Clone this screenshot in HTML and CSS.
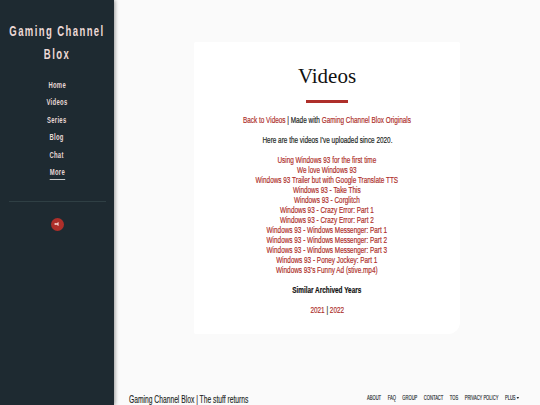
FILE: index.html
```html
<!DOCTYPE html>
<html>
<head>
  <meta charset="UTF-8">
  <title>Videos</title>
  <link rel="stylesheet" href="styles.css">
</head>
<body>
  <div class="sidebar">
    <h1 class="brand">Gaming Channel<br>Blox</h1>
    <nav class="side-nav">
      <a href="#">Home</a>
      <a href="#">Videos</a>
      <a href="#">Series</a>
      <a href="#">Blog</a>
      <a href="#">Chat</a>
      <a href="#" class="current">More</a>
    </nav>
    <hr class="side-rule">
    <button class="share-button" aria-label="Share">
      <svg width="6" height="6" viewBox="0 0 6 6"><path d="M4.6 1 1.2 3l3.4 2z" fill="#f0c9c5"/><circle cx="1.4" cy="3" r="1" fill="#f0c9c5"/></svg>
    </button>
  </div>

  <div class="main">
    <div class="card">
      <h2 class="card-title">Videos</h2>
      <div class="title-bar"></div>
      <p class="intro"><a href="#">Back to Videos</a> | Made with <a href="#">Gaming Channel Blox Originals</a></p>
      <p>Here are the videos I've uploaded since 2020.</p>
      <p>
        <a href="#">Using Windows 93 for the first time</a><br>
        <a href="#">We love Windows 93</a><br>
        <a href="#">Windows 93 Trailer but with Google Translate TTS</a><br>
        <a href="#">Windows 93 - Take This</a><br>
        <a href="#">Windows 93 - Corglitch</a><br>
        <a href="#">Windows 93 - Crazy Error: Part 1</a><br>
        <a href="#">Windows 93 - Crazy Error: Part 2</a><br>
        <a href="#">Windows 93 - Windows Messenger: Part 1</a><br>
        <a href="#">Windows 93 - Windows Messenger: Part 2</a><br>
        <a href="#">Windows 93 - Windows Messenger: Part 3</a><br>
        <a href="#">Windows 93 - Poney Jockey: Part 1</a><br>
        <a href="#">Windows 93's Funny Ad (stive.mp4)</a>
      </p>
      <p><strong>Similar Archived Years</strong></p>
      <p><a href="#">2021</a> | <a href="#">2022</a></p>
    </div>

    <div class="footer">
      <div class="footer-name">Gaming Channel Blox | The stuff returns</div>
      <div class="footer-links">
        <a href="#">About</a>
        <a href="#">FAQ</a>
        <a href="#">Group</a>
        <a href="#">Contact</a>
        <a href="#">TOS</a>
        <a href="#">Privacy Policy</a>
        <a href="#">Plus <span class="caret"></span></a>
      </div>
    </div>
  </div>
</body>
</html>
```

FILE: styles.css
```css
html, body {
  height: 100%;
}

body {
  margin: 0;
  display: flex;
  overflow: hidden;
  background-color: #fafafa;
  color: #1b1f22;
  font-family: "Liberation Sans", sans-serif;
}

a {
  color: #ae2f2a;
  text-decoration: none;
}

/* Sidebar */
.sidebar {
  width: 114px;
  flex-shrink: 0;
  background-color: #1e2a31;
  box-shadow: 1px 0 4px rgba(0, 0, 0, 0.4);
  display: flex;
  flex-direction: column;
  align-items: center;
  padding-top: 19px;
  box-sizing: border-box;
}

/* no condensed face is installed, so the text is squeezed sideways */
.brand {
  margin: 0;
  text-align: center;
  white-space: nowrap;
  font-size: 15px;
  line-height: 23px;
  letter-spacing: 2.2px;
  font-weight: 700;
  color: #edd9d6;
  transform: scaleX(0.635);
}

.side-nav {
  margin-top: 14px;
  display: flex;
  flex-direction: column;
  align-items: center;
}

.side-nav a {
  color: #e8d8d6;
  font-size: 9.5px;
  font-weight: 700;
  letter-spacing: 0.5px;
  line-height: 11px;
  margin-bottom: 6.4px;
  transform: scaleX(0.62);
}

.side-nav a.current {
  padding: 0 0 2px;
  border-bottom: 1px solid #c8c8c8;
  margin-bottom: 0;
}

.side-rule {
  width: 97px;
  margin: 21px 0 0;
  border: none;
  border-top: 1px solid #2f3f44;
}

.share-button {
  width: 13px;
  height: 13px;
  margin-top: 16px;
  padding: 0;
  border: none;
  border-radius: 50%;
  background-color: #ae2f2a;
  display: flex;
  align-items: center;
  justify-content: center;
}

/* Main column */
.main {
  flex: 1;
  min-width: 0;
  display: flex;
  flex-direction: column;
  padding-top: 42px;
  box-sizing: border-box;
}

.card {
  width: 266px;
  height: 292px;
  margin-left: 80px;
  padding-top: 21px;
  box-sizing: border-box;
  background-color: #fff;
  border-radius: 2px 2px 12px 2px;
  display: flex;
  flex-direction: column;
  align-items: center;
  text-align: center;
  font-size: 9.6px;
  line-height: 10px;
}

.card-title {
  margin: 0;
  font-family: "Liberation Serif", serif;
  font-weight: 400;
  font-size: 21px;
  line-height: 26px;
  color: #111;
}

.title-bar {
  width: 42px;
  height: 3px;
  margin: 11px 0 0;
  background-color: #ae2f2a;
}

.card p {
  margin: 10px 0 0;
  white-space: nowrap;
  transform: scaleX(0.667);
  -webkit-text-stroke: 0.2px;
}

.card p.intro {
  margin-top: 12px;
}

.card strong {
  color: #111;
}

/* Footer */
.footer {
  margin-top: auto;
  padding: 0 21px 0 15px;
  display: flex;
  align-items: center;
  justify-content: space-between;
  height: 12px;
  box-sizing: border-box;
}

.footer-name {
  width: 119px;
  flex: none;
  font-size: 11px;
  white-space: nowrap;
  -webkit-text-stroke: 0.15px;
  transform: scaleX(0.61);
  transform-origin: left center;
}

.footer-links {
  flex: none;
  display: flex;
  gap: 10px;
  margin-bottom: 3px;
  white-space: nowrap;
  transform: scaleX(0.65);
  transform-origin: right center;
}

.footer-links a {
  color: #23282c;
  font-size: 6.3px;
  text-transform: uppercase;
  -webkit-text-stroke: 0.15px;
}

.caret {
  display: inline-block;
  border: 2px solid transparent;
  border-top-color: #23282c;
  border-bottom: none;
  vertical-align: middle;
}
```
